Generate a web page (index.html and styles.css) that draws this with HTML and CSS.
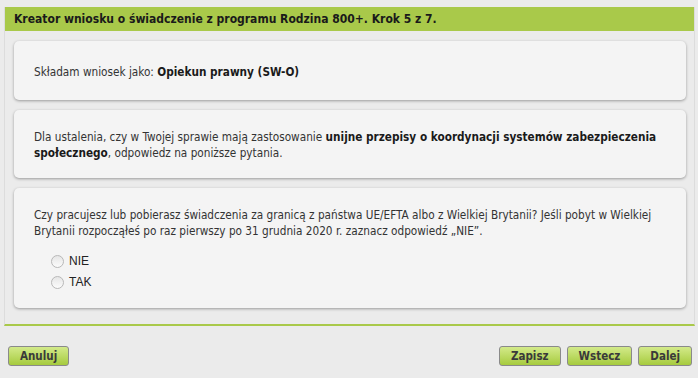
FILE: index.html
```html
<!DOCTYPE html>
<html lang="pl">

<head>
    <meta charset="UTF-8">
    <meta name="viewport" content="width=device-width, initial-scale=1.0">
    <title>Kreator wniosku</title>
    <link rel="stylesheet" href="styles.css">
</head>

<body>
    <div class="wizard">
        <div class="wizard-header">Kreator wniosku o świadczenie z programu Rodzina 800+. Krok 5 z 7.</div>

        <div class="wizard-body">
            <div class="card card-role">
                <p>Składam wniosek jako: <b>Opiekun prawny (SW-O)</b></p>
            </div>

            <div class="card card-info">
                <p>Dla ustalenia, czy w Twojej sprawie mają zastosowanie <b>unijne przepisy o koordynacji systemów zabezpieczenia</b> <b>społecznego</b>, odpowiedz na poniższe pytania.</p>
            </div>

            <div class="card card-question">
                <p>Czy pracujesz lub pobierasz świadczenia za granicą z państwa UE/EFTA albo z Wielkiej Brytanii? Jeśli pobyt w Wielkiej Brytanii rozpocząłeś po raz pierwszy po 31 grudnia 2020 r. zaznacz odpowiedź „NIE”.</p>
                <div class="answers">
                    <label class="answer"><span class="radio"></span>NIE</label>
                    <label class="answer"><span class="radio"></span>TAK</label>
                </div>
            </div>
        </div>
    </div>

    <div class="actions">
        <button class="btn">Anuluj</button>
        <div class="actions-right">
            <button class="btn">Zapisz</button>
            <button class="btn">Wstecz</button>
            <button class="btn">Dalej</button>
        </div>
    </div>
</body>

</html>
```

FILE: styles.css
```css
body {
    margin: 0;
    padding: 7px 3px 0 4px;
    background-color: #ebebeb;
    font-family: 'DejaVu Sans Condensed', 'DejaVu Sans', sans-serif;
    font-size: 11.7px;
    color: #333;
}

.wizard {
    border: 1px solid #dcdcdc;
    border-top: none;
    border-bottom: 2px solid #a9c94a;
    background-color: #ebebeb;
}

.wizard-header {
    background-color: #a9c94a;
    color: #1a1a1a;
    font-weight: bold;
    font-size: 12px;
    height: 24px;
    line-height: 24px;
    padding-left: 9px;
}

.wizard-body {
    display: flex;
    flex-direction: column;
    gap: 10px;
    padding: 10px 8px 16px 9px;
}

.card {
    background-color: #f4f4f4;
    border-radius: 5px;
    box-shadow: 0 1px 3px rgba(0, 0, 0, 0.35);
    padding: 0 20px;
}

.card p {
    margin: 0;
    line-height: 16px;
}

.card b {
    color: #1a1a1a;
}

.card-role {
    height: 59px;
    display: flex;
    align-items: center;
    padding-top: 2px;
    box-sizing: border-box;
}

.card-info {
    height: 68px;
    display: flex;
    align-items: center;
    padding-top: 2px;
    box-sizing: border-box;
}

.card-question {
    height: 120px;
    padding-top: 19px;
    box-sizing: border-box;
}

.answers {
    display: flex;
    flex-direction: column;
    gap: 5px;
    margin-top: 14px;
    padding-left: 17px;
}

.answer {
    display: flex;
    align-items: center;
    gap: 5px;
    font-family: 'Liberation Sans', Arial, sans-serif;
    font-size: 12px;
    color: #222;
    height: 16px;
}

.radio {
    width: 11px;
    height: 11px;
    border-radius: 50%;
    border: 1px solid #b8b8b8;
    background: linear-gradient(#e6e6e6, #fbfbfb);
}

.actions {
    display: flex;
    justify-content: space-between;
    padding: 20px 3px 0 4px;
}

.actions-right {
    display: flex;
    gap: 6px;
}

.btn {
    height: 20px;
    padding: 0 11px;
    border: 1px solid #8a8a8a;
    border-radius: 3px;
    background: linear-gradient(#d3ea8a, #a6cb3e);
    color: #3a3a3a;
    font-family: 'DejaVu Sans Condensed', 'DejaVu Sans', sans-serif;
    font-weight: bold;
    font-size: 11.5px;
    cursor: pointer;
}
```
